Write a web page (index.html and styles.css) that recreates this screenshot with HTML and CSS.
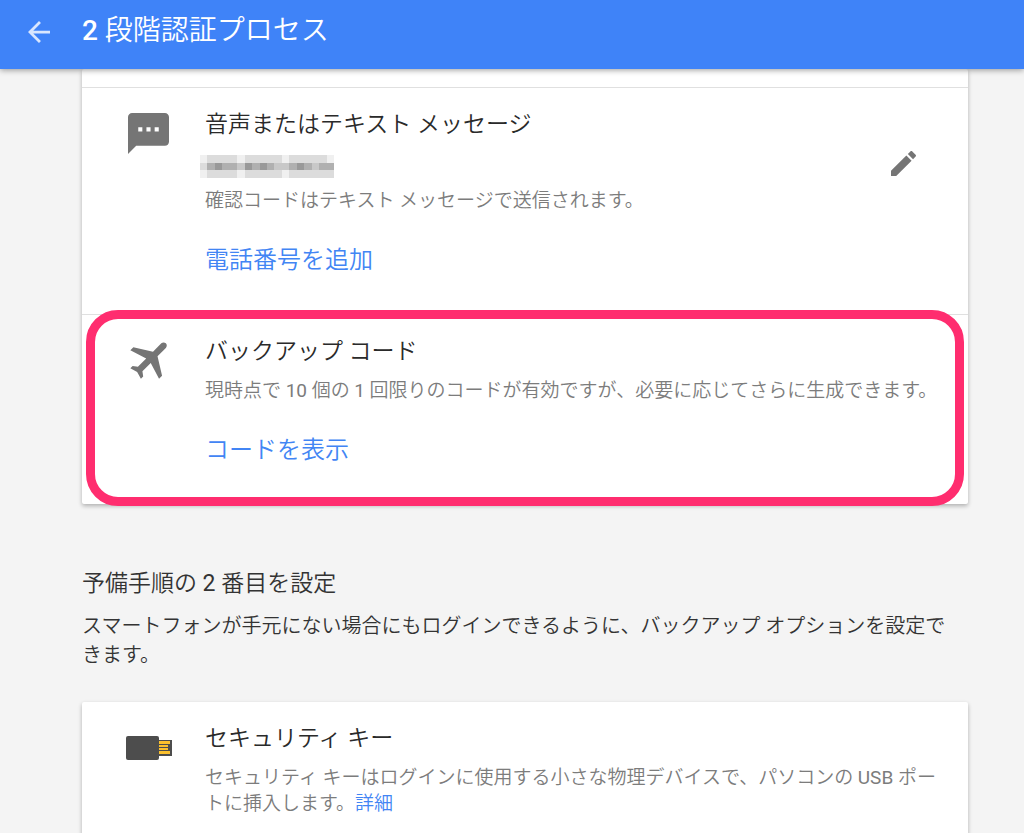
FILE: index.html
```html
<!DOCTYPE html>
<html lang="ja">
<head>
    <meta charset="UTF-8">
    <meta name="viewport" content="width=device-width, initial-scale=1.0">
    <title>2 段階認証プロセス</title>
    <link rel="stylesheet" href="styles.css">
</head>
<body>
    <header class="app-bar">
        <a class="back" href="#" aria-label="戻る">
            <svg viewBox="4 4 16 16" width="22" height="22"><path d="M20 11H7.83l5.59-5.59L12 4l-8 8 8 8 1.41-1.41L7.83 13H20v-2z"/></svg>
        </a>
        <h1><span class="num">2</span> 段階認証プロセス</h1>
    </header>

    <main>
        <section class="card card-top">
            <div class="row">
                <svg class="row-icon" viewBox="2 2 20 20" width="41" height="41"><path d="M20 2H4c-1.100 0-2 .9-2 2v18l4-4h14c1.100 0 2-.9 2-2V4c0-1.100-.9-2-2-2zM9 11H7V9h2v2zm4 0h-2V9h2v2zm4 0h-2V9h2v2z"/></svg>
                <div class="row-body">
                    <h2>音声またはテキスト メッセージ</h2>
                    <svg class="masked" viewBox="0 0 18 3" width="134" height="23" preserveAspectRatio="none" role="img" aria-label="電話番号">
                        <path fill="#f0f0f0" d="M0 0h1v1H0zM0 2h1v1H0zM5 0h1v1H5zM5 2h1v1H5zM11 0h1v1h-1zM11 2h1v1h-1zM17 0h1v1h-1z"/>
                        <path fill="#dcdcdc" d="M1 0h4v1H1zM6 0h5v1H6zM12 0h5v1h-5zM0 1h1v1H0zM1 2h4v1H1zM6 2h5v1H6zM12 2h6v1h-6z"/>
                        <path fill="#c8c8c8" d="M5 1h1v1H5zM10 1h2v1h-2zM15 1h1v1h-1z"/>
                        <path fill="#b0b0b0" d="M1 1h4v1H1zM6 1h4v1H6zM12 1h3v1h-3zM16 1h2v1h-2z"/>
                        <path fill="#999" d="M2 1h1v1H2zM6 1h1v1H6zM8 1h1v1H8zM13 1h1v1h-1z"/>
                    </svg>
                    <p>確認コードはテキスト メッセージで送信されます。</p>
                    <a class="action" href="#">電話番号を追加</a>
                </div>
                <button class="edit" type="button" aria-label="編集">
                    <svg viewBox="3 3 18 18" width="25" height="25"><path d="M3 17.250V21h3.750L17.810 9.940l-3.750-3.750L3 17.250zM20.710 7.040c.39-.39.39-1.020 0-1.410l-2.340-2.340c-.39-.39-1.020-.39-1.410 0l-1.830 1.830 3.750 3.750 1.830-1.830z"/></svg>
                </button>
            </div>
            <div class="row">
                <svg class="row-icon" viewBox="1 3 19.200 19.200" width="41" height="41"><path transform="rotate(45 12 12)" d="M21 16v-2l-8-5V3.500c0-.83-.67-1.500-1.500-1.500S10 2.670 10 3.500V9l-8 5v2l8-2.500V19l-2 1.500V22l3.500-1 3.500 1v-1.500L13 19v-5.500l8 2.500z"/></svg>
                <div class="row-body">
                    <h2>バックアップ コード</h2>
                    <p>現時点で <span class="latin">10</span> 個の <span class="latin">1</span> 回限りのコードが有効ですが、必要に応じてさらに生成できます。</p>
                    <a class="action" href="#">コードを表示</a>
                </div>
                <div class="highlight"></div>
            </div>
        </section>

        <section class="intro">
            <h2>予備手順の <span class="latin">2</span> 番目を設定</h2>
            <p>スマートフォンが手元にない場合にもログインできるように、バックアップ オプションを設定できます。</p>
        </section>

        <section class="card">
            <div class="row row-key">
                <svg class="key-icon" viewBox="0 0 46 24" width="46" height="24">
                    <rect width="33" height="24" rx="2" fill="#4d4d4d"/>
                    <path fill="#4d4d4d" d="M32 4h14v16H32z"/>
                    <path fill="#fbc02d" d="M33 5h11v3H33zM33 9h9v2H33zM33 12h9v2H33zM33 15h11v3H33z"/>
                </svg>
                <div class="row-body">
                    <h2>セキュリティ キー</h2>
                    <p>セキュリティ キーはログインに使用する小さな物理デバイスで、パソコンの <span class="latin">USB</span> ポートに挿入します。<a href="#">詳細</a></p>
                </div>
            </div>
        </section>
    </main>
</body>
</html>
```

FILE: styles.css
```css
* {
    box-sizing: border-box;
}

body {
    margin: 0;
    background: #f4f4f4;
    color: #333;
    font-family: Roboto, "Noto Sans CJK JP", sans-serif;
    font-weight: 350;
    overflow: hidden;
}

h1, h2, p {
    margin: 0;
    font-weight: 350;
}

a {
    color: #4285f4;
    text-decoration: none;
}

svg {
    display: block;
}

.app-bar {
    position: relative;
    display: flex;
    align-items: center;
    height: 69px;
    padding: 0 28px 8px;
    background: #3f83f8;
    color: #fff;
    box-shadow: 0 1px 6px rgba(0, 0, 0, 0.4);
    z-index: 1;
}

.back {
    width: 54px;
    padding-top: 3px;
    fill: #d9e6fe;
}

.app-bar h1 {
    font-size: 28px;
    line-height: 40px;
}

.num {
    font-weight: 500;
}

/* digits and latin words need a bit more weight than the kana */
.latin {
    font-weight: 400;
}

main {
    padding: 0 56px 0 82px;
}

.card {
    background: #fff;
    border-radius: 2px;
    box-shadow: 0 2px 4px rgba(0, 0, 0, 0.28);
}

.card-top {
    padding-top: 18px;
}

.row {
    position: relative;
    display: flex;
    align-items: flex-start;
    padding: 21px 22px 36px 46px;
    border-top: 1px solid #e0e0e0;
}

.row-icon {
    flex: none;
    margin: 4px 36px 0 0;
    fill: #757575;
}

.row-body {
    flex: 1;
}

.row h2 {
    font-size: 23px;
    line-height: 32px;
    color: #2a2a2a;
}

.row p {
    padding-top: 10px;
    font-size: 19px;
    line-height: 26px;
    color: #7c7c7c;
}

.masked {
    margin: 14px 0 0 -5px;
    shape-rendering: crispEdges;
}

.action {
    display: inline-block;
    margin-top: 28px;
    font-size: 24px;
    line-height: 36px;
}

.edit {
    margin: 42px 30px 0 0;
    padding: 0;
    border: 0;
    background: none;
    fill: #757575;
    cursor: pointer;
}

/* pink frame round the backup codes */
.highlight {
    position: absolute;
    inset: -5px 4px -2px 4px;
    border: 9px solid #ff2d6f;
    border-radius: 32px;
    pointer-events: none;
}

.intro {
    padding: 64px 10px 32px 0;
}

.intro h2 {
    font-size: 23px;
    line-height: 32px;
}

.intro p {
    padding-top: 12px;
    font-size: 20px;
    line-height: 29px;
}

.row-key {
    border-top: 0;
    padding-left: 44px;
}

.key-icon {
    flex: none;
    margin: 13px 33px 0 0;
}
```
